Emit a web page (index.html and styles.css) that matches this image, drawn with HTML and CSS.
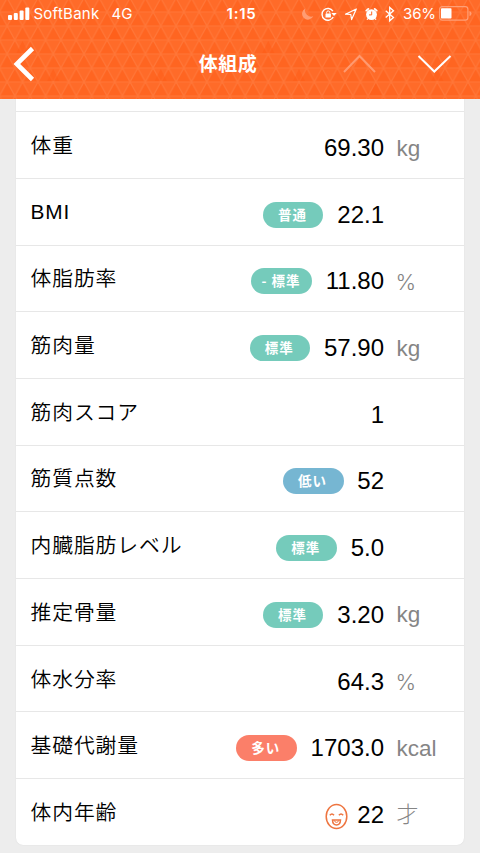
FILE: index.html
```html
<!DOCTYPE html>
<html lang="ja">
<head>
<meta charset="utf-8">
<title>体組成</title>
<link rel="stylesheet" href="styles.css">
</head>
<body>
<header class="header">
  <svg class="pattern" width="480" height="99" aria-hidden="true">
    <defs>
      <pattern id="tri" width="15.36" height="28" patternUnits="userSpaceOnUse" patternTransform="translate(-.5 -2)">
        <path d="M7.68 0L15.36 14H0Z M0 14L7.68 28H-7.68Z M15.36 14L23.04 28H7.68Z" fill="#ff6521"/>
        <path d="M0 0H15.36M0 14H15.36M0 28H15.36M7.68 0L15.36 14L7.68 28M7.68 0L0 14L7.68 28" fill="none" stroke="#ff7638" stroke-width="1.2"/>
      </pattern>
    </defs>
    <rect width="480" height="99" fill="#ff6b29"/>
    <rect width="480" height="99" fill="url(#tri)"/>
    <path d="M22.500 41L28.500 53H16.500ZM114.700 27L120.700 39H108.700ZM53.200 69L59.200 81H47.200ZM160.800 69L166.800 81H154.800ZM268.300 41L274.300 53H262.300ZM299 69L305 81H293ZM375.800 83L381.800 95H369.800ZM437.300 69L443.300 81H431.300Z" fill="#ff5b16" opacity=".5"/>
  </svg>
  <div class="status">
    <svg class="signal" width="22" height="13" viewBox="0 0 22 13" fill="#fff"><rect x="0" y="8" width="4" height="5" rx="1"/><rect x="5.800" y="6" width="4" height="7" rx="1"/><rect x="11.600" y="3.500" width="4" height="9.500" rx="1"/><rect x="17.300" y="0.500" width="4" height="12.500" rx="1"/></svg>
    <span class="carrier">SoftBank</span><span class="network">4G</span>
    <span class="time">1:15</span>
    <svg class="icons" width="98" height="18" viewBox="300 4 98 18" fill="none" stroke="#fff">
      <path d="M305.300 7.500A5.900 5.900 0 1 0 313.300 15.300A6.300 6.300 0 0 1 305.300 7.500Z" fill="#ff9c72" stroke="none"/>
      <path d="M332.900 10.200A5.900 5.900 0 1 0 333.200 16" stroke-width="1.400"/><path d="M331.300 11.900H336.700L334 15.100Z" fill="#fff" stroke="none"/>
      <rect x="325.500" y="12.400" width="5.400" height="4.200" rx=".5" fill="#fff" stroke="none"/><path d="M326.600 12.500V11.500A1.600 1.600 0 0 1 329.800 11.500V12.500" stroke-width="1"/>
      <path d="M345.500 13.200L356.300 8L351.600 18.600L350.800 13.500Z" stroke-width="1.200" stroke-linejoin="round"/>
      <circle cx="371.500" cy="13.600" r="5.400" fill="#fff" stroke="none"/><path d="M366.300 9.600L368.300 7.900M376.700 9.600L374.700 7.900" stroke-width="1.900" stroke-linecap="round"/><path d="M367.900 17.600L367 18.600M375.100 17.600L376 18.600" stroke-width="1.400"/><path d="M371.700 10.500V13.900H369" stroke="#ff6521" stroke-width="1"/>
      <path d="M385.700 9.800L393.500 16.600L389.700 19.800V6.500L393.500 9.700L385.700 16.500" stroke-width="1.300"/>
    </svg>
    <span class="percent">36%</span>
    <svg class="battery" width="33" height="15" viewBox="0 0 33 15"><rect x=".6" y=".6" width="28.300" height="13.600" rx="2.600" fill="none" stroke="#ff9f76" stroke-width="1.200"/><rect x="2" y="2.300" width="10.500" height="10.200" rx=".8" fill="#fff"/><path d="M30.500 5V10Q32.500 9.500 32.500 7.500T30.500 5Z" fill="#ff9f76"/></svg>
  </div>
  <nav class="nav">
    <svg class="back" width="22" height="36" viewBox="0 0 22 36"><path d="M19.500 2.500L3.800 18L19.500 33.500" fill="none" stroke="#fff" stroke-width="4.600"/></svg>
    <h1 class="title">体組成</h1>
    <svg class="arrows" width="110" height="22" viewBox="0 0 110 22" fill="none" stroke="#fff" stroke-width="2"><path d="M2 19L17.500 3L33 19" stroke="#ff9a70"/><path d="M76.500 3L92.300 18.500L108.500 3"/></svg>
  </nav>
</header>
<main class="card">
  <div class="row row-partial"></div>
  <div class="row"><span class="label">体重</span><span class="value">69.30</span><span class="unit">kg</span></div>
  <div class="row"><span class="label latin">BMI</span><span class="badge">普通</span><span class="value">22.1</span><span class="unit"></span></div>
  <div class="row"><span class="label">体脂肪率</span><span class="badge">- 標準</span><span class="value">11.80</span><span class="unit percent-unit">%</span></div>
  <div class="row"><span class="label">筋肉量</span><span class="badge">標準</span><span class="value">57.90</span><span class="unit">kg</span></div>
  <div class="row"><span class="label">筋肉スコア</span><span class="value">1</span><span class="unit"></span></div>
  <div class="row"><span class="label">筋質点数</span><span class="badge low">低い</span><span class="value">52</span><span class="unit"></span></div>
  <div class="row"><span class="label">内臓脂肪レベル</span><span class="badge">標準</span><span class="value">5.0</span><span class="unit"></span></div>
  <div class="row"><span class="label">推定骨量</span><span class="badge">標準</span><span class="value">3.20</span><span class="unit">kg</span></div>
  <div class="row"><span class="label">体水分率</span><span class="value">64.3</span><span class="unit percent-unit">%</span></div>
  <div class="row"><span class="label">基礎代謝量</span><span class="badge high">多い</span><span class="value">1703.0</span><span class="unit">kcal</span></div>
  <div class="row"><span class="label">体内年齢</span>
    <svg class="face" width="23" height="27" viewBox="0 0 23 27" fill="none" stroke="#ee7540" stroke-width="1.500"><ellipse cx="11.500" cy="13.500" rx="10.300" ry="12.100"/><path d="M4.800 12.300Q7 9.800 9 12.300M13.900 12.300Q16 9.800 18.200 12.300"/><path d="M7.500 17H15.500Q15.300 22 11.500 22T7.500 17Z"/><path d="M9.500 17.500Q9.700 19.400 11.500 19.400T13.500 17.500" stroke-width="1"/></svg>
    <span class="value">22</span><span class="unit age">才</span></div>
</main>
</body>
</html>
```
FILE: styles.css
```css
* { box-sizing: border-box; }
body {
  margin: 0;
  height: 853px;
  overflow: hidden;
  background: #ededed;
  font-family: "Liberation Sans", "Noto Sans CJK JP", sans-serif;
  color: #000;
}
.header {
  position: relative;
  height: 98.6px;
  overflow: hidden;
  color: #fff;
}
.pattern { position: absolute; inset: 0; }
.status {
  position: relative;
  display: flex;
  align-items: center;
  height: 27px;
  padding-left: 7.500px;
  font: 15px/27px Inter, sans-serif;
  white-space: nowrap;
}
.signal { margin-top: -1px; }
.carrier { width: 78px; margin-left: 4px; letter-spacing: .25px; }
.network { width: 115px; }
.time { width: 73.500px; font-weight: 600; letter-spacing: .8px; }
.percent { width: 36px; margin-left: 5px; letter-spacing: -.1px; }
.battery { flex: none; }
.icons { flex: none; }
.nav {
  position: relative;
  display: grid;
  grid-template-columns: 1fr auto 1fr;
  align-items: center;
  height: 74px;
  padding: 0 28px 0 13px;
}
.title {
  margin: -2px 0 0 -9px;
  font: 700 19px/24px "Noto Sans CJK JP", sans-serif;
  letter-spacing: .5px;
}
.arrows { justify-self: end; }
.card {
  width: 448.500px;
  margin-left: 15.500px;
  background: #fff;
  border-radius: 0 0 7px 7px;
  box-shadow: 0 0 1px #ccc;
}
.row {
  display: flex;
  align-items: center;
  height: 66.700px;
  padding-left: 15px;
  border-bottom: 1px solid #e7e7e7;
}
.row:last-child { height: 66.300px; border-bottom: 0; }
.row-partial { height: 13.600px; }
.label {
  margin: -2px auto 0 0;
  font-size: 20.800px;
  font-weight: 350;
  letter-spacing: .9px;
}
.latin { margin-top: 1px; }
.badge {
  width: 60.500px;
  height: 26px;
  margin: 6px 13.800px 0 0;
  padding-right: 1.500px;
  border-radius: 13px;
  background: #75cbbb;
  color: #fff;
  font: 700 13.500px/24px "Noto Sans CJK JP", sans-serif;
  letter-spacing: 1px;
  text-align: center;
}
.low { background: #76b6d2; }
.high { background: #fb7f69; }
.value { margin-top: 6px; font-size: 24px; }
.unit {
  width: 67.500px;
  margin: 7px 0 0 12.500px;
  color: #858585;
  font-size: 22.500px;
}
.percent-unit { margin-left: 11.500px; width: 68.500px; font-family: Inter, sans-serif; font-weight: 300; font-size: 22px; }
.face { margin: 8px 9px 0 0; }
.age { font-weight: 300; font-size: 22px; margin-top: 0; }
```
